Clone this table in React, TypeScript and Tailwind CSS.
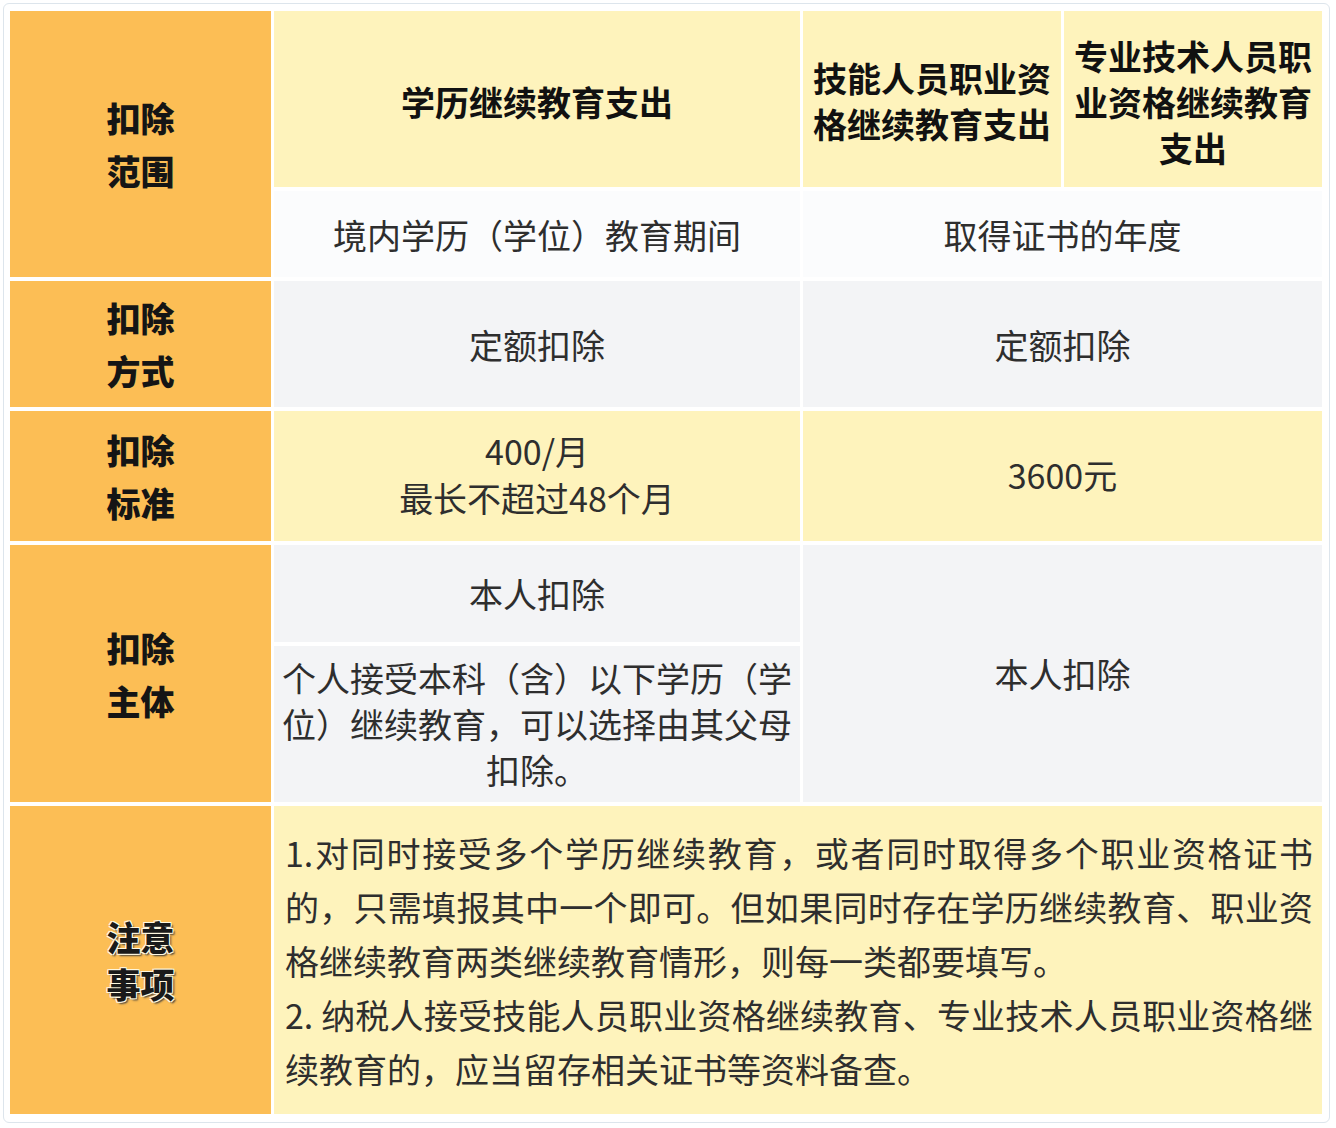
// App.tsx
// 继续教育专项附加扣除 table, rebuilt as a CSS grid.

const FONT = "font-['Noto_Sans_CJK_SC','Noto_Sans',sans-serif]"

const labelBase = 'flex items-center justify-center bg-[#fcbe55] text-[34px] font-black text-center'
const label = `${labelBase} leading-[53px] text-[#151515]`
const head = 'flex items-center justify-center bg-[#fef3bc] text-[34px] leading-[46px] font-bold text-[#111] text-center whitespace-nowrap'
const body = 'flex items-center justify-center text-[34px] text-[#2e2e2e] text-center whitespace-nowrap'

const notes: { text: string; full: boolean }[] = [
  { text: '1.对同时接受多个学历继续教育，或者同时取得多个职业资格证书', full: true },
  { text: '的，只需填报其中一个即可。但如果同时存在学历继续教育、职业资', full: true },
  { text: '格继续教育两类继续教育情形，则每一类都要填写。', full: false },
  { text: '2. 纳税人接受技能人员职业资格继续教育、专业技术人员职业资格继', full: true },
  { text: '续教育的，应当留存相关证书等资料备查。', full: false },
]

export default function App() {
  return (
    <div className={`${FONT} bg-white p-[3px]`}>
      <div className="w-[1327px] h-[1120px] rounded-md border border-[#dde5ec] pt-[7px] pl-[6px]">
        <div className="grid grid-cols-[261px_526px_258px_258px] grid-rows-[176px_86px_126px_130px_97px_156px_308px] gap-x-[3px] gap-y-[4px]">
          {/* 扣除范围 */}
          <div className={`${label} col-start-1 row-start-1 row-span-2`}>
            <div>扣除<br />范围</div>
          </div>
          <div className={`${head} col-start-2 row-start-1 pt-[6px]`}>学历继续教育支出</div>
          <div className={`${head} col-start-3 row-start-1 pt-[4px]`}>
            <div>技能人员职业资<br />格继续教育支出</div>
          </div>
          <div className={`${head} col-start-4 row-start-1 pt-[6px]`}>
            <div>专业技术人员职<br />业资格继续教育<br />支出</div>
          </div>
          <div className={`${body} col-start-2 row-start-2 bg-[#fbfcfd]`}>境内学历（学位）教育期间</div>
          <div className={`${body} col-start-3 col-span-2 row-start-2 bg-[#fbfcfd]`}>取得证书的年度</div>

          {/* 扣除方式 */}
          <div className={`${label} col-start-1 row-start-3`}>
            <div>扣除<br />方式</div>
          </div>
          <div className={`${body} col-start-2 row-start-3 bg-[#f3f4f6]`}>定额扣除</div>
          <div className={`${body} col-start-3 col-span-2 row-start-3 bg-[#f3f4f6]`}>定额扣除</div>

          {/* 扣除标准 */}
          <div className={`${label} col-start-1 row-start-4`}>
            <div>扣除<br />标准</div>
          </div>
          <div className={`${body} col-start-2 row-start-4 bg-[#fef3bc] leading-[47px] pb-[4px]`}>
            <div>400/月<br />最长不超过48个月</div>
          </div>
          <div className={`${body} col-start-3 col-span-2 row-start-4 bg-[#fef3bc] pb-[4px]`}>3600元</div>

          {/* 扣除主体 */}
          <div className={`${label} col-start-1 row-start-5 row-span-2`}>
            <div>扣除<br />主体</div>
          </div>
          <div className={`${body} col-start-2 row-start-5 bg-[#f3f4f6]`}>本人扣除</div>
          <div className={`${body} col-start-3 col-span-2 row-start-5 row-span-2 bg-[#f3f4f6]`}>本人扣除</div>
          <div className={`${body} col-start-2 row-start-6 bg-[#f3f4f6] leading-[46px]`}>
            <div>个人接受本科（含）以下学历（学<br />位）继续教育，可以选择由其父母<br />扣除。</div>
          </div>

          {/* 注意事项 */}
          <div className={`${labelBase} col-start-1 row-start-7 leading-[47px] text-[#1a1a1a] [text-shadow:-1px_-1px_0_#fff8e0,1px_-1px_0_#fff8e0,-1px_1px_0_#fff8e0,1px_1px_0_#fff8e0,2px_2px_2px_#3a3a3a]`}>
            <div>注意<br />事项</div>
          </div>
          <div className="col-start-2 col-span-3 row-start-7 flex flex-col justify-center bg-[#fef3bc] pl-[11px] pr-[9px] pt-[2px] text-[34px] leading-[54px] text-[#2e2e2e]">
            {notes.map(n => (
              <div key={n.text} className={n.full ? 'text-justify [text-align-last:justify] whitespace-nowrap' : 'text-left whitespace-nowrap'}>
                {n.text}
              </div>
            ))}
          </div>
        </div>
      </div>
    </div>
  )
}
